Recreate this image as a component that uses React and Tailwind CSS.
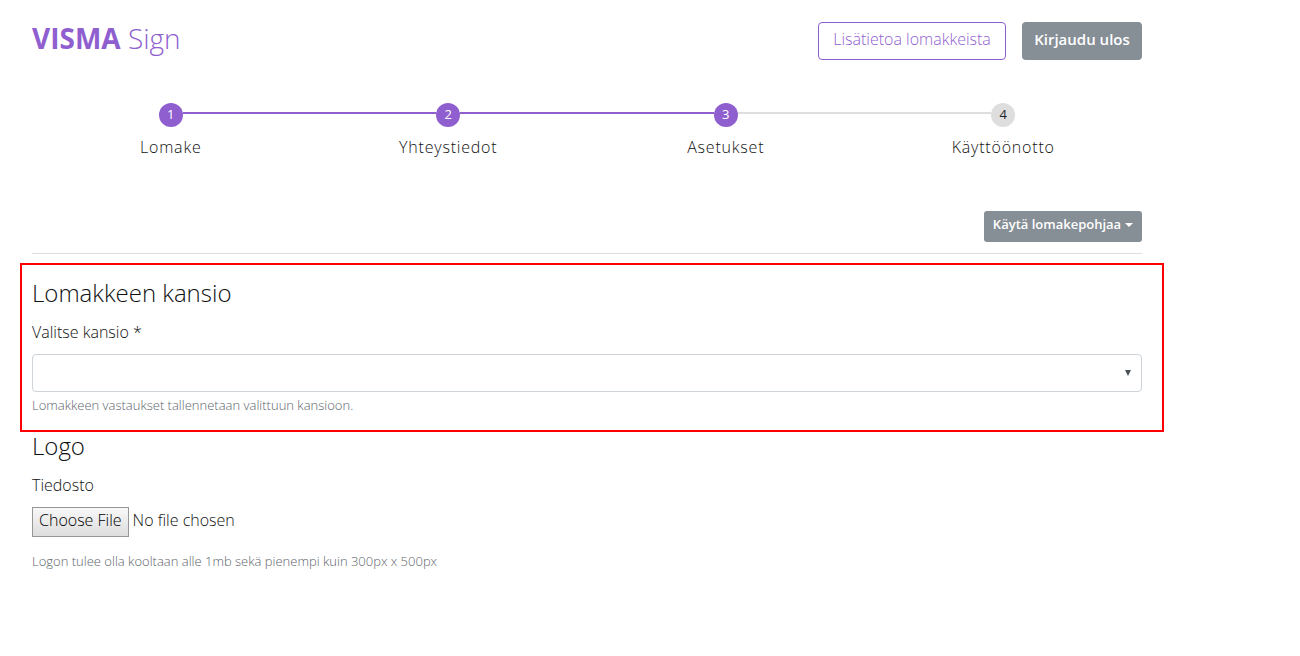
import clsx from "clsx";

const steps = [
  { number: 1, label: "Lomake", done: true, lineBefore: false, lineAfter: true },
  { number: 2, label: "Yhteystiedot", done: true, lineBefore: true, lineAfter: true },
  { number: 3, label: "Asetukset", done: true, lineBefore: true, lineAfter: true },
  { number: 4, label: "Käyttöönotto", done: false, lineBefore: true, lineAfter: false },
];

function lineColor(visible, active) {
  if (!visible) return "bg-transparent";
  return active ? "bg-[#8f5fd0]" : "bg-[#dedede]";
}

function Header() {
  return (
    <header className="flex items-start justify-between">
      <a href="#" className="text-[28px] leading-8 text-[#8f5fd0]">
        <span className="font-bold">VISMA</span> <span className="font-light">Sign</span>
      </a>
      <div className="flex gap-4">
        <button
          type="button"
          className="h-[38px] w-[188px] rounded border border-[#8f5fd0] bg-white pb-1 text-base font-[350] text-[#8f5fd0]"
        >
          Lisätietoa lomakkeista
        </button>
        <button
          type="button"
          className="h-[38px] w-[120px] rounded bg-[#868e96] pb-1 text-[15px] font-semibold text-white"
        >
          Kirjaudu ulos
        </button>
      </div>
    </header>
  );
}

function Steps() {
  return (
    <ol className="mt-[43px] grid grid-cols-4">
      {steps.map((step) => (
        <li key={step.number}>
          <div className="flex items-start">
            <span className={clsx("mt-[9px] h-[2px] flex-1", lineColor(step.lineBefore, step.done))} />
            <span
              className={clsx(
                "flex size-6 items-center justify-center rounded-full text-[13px] font-normal",
                step.done ? "bg-[#8f5fd0] text-white" : "bg-[#dedede] text-[#212529]"
              )}
            >
              {step.number}
            </span>
            <span
              className={clsx(
                "mt-[9px] h-[2px] flex-1",
                lineColor(step.lineAfter, step.done && step.number < 3)
              )}
            />
          </div>
          <p className="mt-2 text-center text-base tracking-wider">{step.label}</p>
        </li>
      ))}
    </ol>
  );
}

function FolderSection() {
  return (
    <section className="mt-[9px] h-[169px] border-2 border-[#f00] pt-[14px] pr-5 pl-[10px]">
      <h2 className="text-2xl leading-7">Lomakkeen kansio</h2>
      <label htmlFor="folder" className="mt-[13px] block text-base">
        Valitse kansio *
      </label>
      <div className="relative mt-[10px]">
        <select
          id="folder"
          className="block h-[38px] w-full appearance-none rounded border border-[#ced4da] bg-white px-3"
        />
        <svg className="pointer-events-none absolute top-4 right-[11px]" width="6" height="6" viewBox="0 0 6 6">
          <path d="M0 0h6L3 6z" fill="#495057" />
        </svg>
      </div>
      <p className="mt-[3px] text-[13px] leading-5 text-[#5c646b]">
        Lomakkeen vastaukset tallennetaan valittuun kansioon.
      </p>
    </section>
  );
}

function LogoSection() {
  return (
    <section className="pl-3">
      <h2 className="text-2xl leading-7">Logo</h2>
      <label htmlFor="logo" className="mt-[13px] block text-base">
        Tiedosto
      </label>
      <input
        id="logo"
        type="file"
        className="mt-[10px] block h-[30px] w-full text-base leading-6 file:mr-1 file:h-[30px] file:border file:border-solid file:border-[#979797] file:bg-linear-to-b file:from-[#f8f8f8] file:to-[#dddddd] file:px-[6px] file:pb-1 file:text-black"
      />
      <p className="mt-[14px] text-[13px] leading-5 text-[#5c646b]">
        Logon tulee olla kooltaan alle 1mb sekä pienempi kuin 300px x 500px
      </p>
    </section>
  );
}

export default function App() {
  return (
    <main className="max-w-[1164px] bg-white pt-[22px] pl-5 font-['Open_Sans','Noto_Sans',sans-serif] font-light text-[#111]">
      <div className="pr-[22px] pl-3">
        <Header />
        <Steps />
        <div className="mt-[52px] flex justify-end border-b border-[#dedede] pb-[11px]">
          <button
            type="button"
            className="flex h-[31px] w-[158px] items-center justify-center gap-1 rounded-[3px] bg-[#868e96] pb-1 text-[13px] font-semibold text-white"
          >
            Käytä lomakepohjaa
            <svg width="8" height="4" viewBox="0 0 8 4">
              <path d="M0 0h8L4 4z" fill="currentColor" />
            </svg>
          </button>
        </div>
      </div>
      <FolderSection />
      <LogoSection />
    </main>
  );
}
